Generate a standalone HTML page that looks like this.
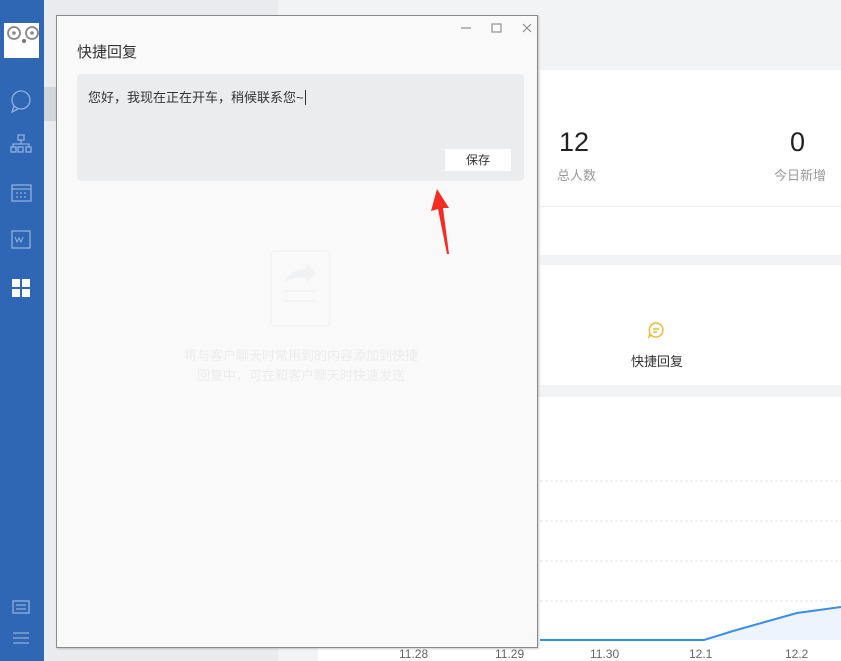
<!DOCTYPE html>
<html><head><meta charset="utf-8"><style>
*{margin:0;padding:0;box-sizing:border-box}
body{width:841px;height:661px;overflow:hidden;position:relative;background:#f2f3f5;font-family:"Liberation Sans","Noto Sans CJK SC",sans-serif}
.abs{position:absolute}
</style></head><body>
<div class="abs" style="left:0;top:0;width:44px;height:661px;background:#2f67b5"></div>
<div class="abs" style="left:4px;top:23px;width:35px;height:35px;background:#fff"></div>
<svg class="abs" style="left:4px;top:23px" width="35" height="22"><circle cx="10" cy="10" r="6" fill="none" stroke="#888" stroke-width="1.8"/><circle cx="10" cy="10" r="1.8" fill="#888"/><circle cx="28" cy="10" r="6" fill="none" stroke="#888" stroke-width="1.8"/><circle cx="28" cy="10" r="1.8" fill="#888"/><circle cx="20" cy="18" r="2" fill="#777"/></svg>
<svg class="abs" style="left:0;top:85px" width="44" height="320" fill="none" stroke="#8fb0de" stroke-width="1.3">
<circle cx="21" cy="15" r="9"/><path d="M14 21l-2 6 6-3" />
<rect x="18" y="50" width="6" height="5"/><rect x="11" y="62" width="5" height="5"/><rect x="18" y="62" width="5" height="5"/><rect x="26" y="62" width="5" height="5"/><path d="M21 55v4M13 62v-3h16v3"/>
<rect x="12" y="100" width="19" height="16"/><path d="M12 104h19"/><path d="M16 108h2M20 108h2M24 108h2M16 112h2M20 112h2M24 112h2"/>
<rect x="12" y="146" width="18" height="17"/><path d="M15 152l2 5 2-4 2 4 2-5" stroke-width="1"/>
</svg>
<div class="abs" style="left:12px;top:279px;width:8px;height:8px;background:#fff"></div><div class="abs" style="left:22px;top:279px;width:8px;height:8px;background:#fff"></div>
<div class="abs" style="left:12px;top:289px;width:8px;height:8px;background:#fff"></div><div class="abs" style="left:22px;top:289px;width:8px;height:8px;background:#fff"></div>
<svg class="abs" style="left:0;top:595px" width="44" height="60" fill="none" stroke="#8fb0de" stroke-width="1.3"><rect x="13" y="6" width="16" height="12"/><path d="M16 10h10M16 14h10"/><path d="M13 38h16M13 43h16M13 48h16"/></svg>
<div class="abs" style="left:44px;top:0;width:234px;height:661px;background:#e9ebee"></div>
<div class="abs" style="left:44px;top:87px;width:12px;height:34px;background:#d2d5d9"></div>
<div class="abs" style="left:540px;top:70px;width:301px;height:185px;background:#fff"></div>
<div class="abs" style="left:540px;top:206px;width:301px;height:1px;background:#eee"></div>
<div class="abs" style="left:540px;top:265px;width:301px;height:120px;background:#fff"></div>
<div class="abs" style="left:318px;top:397px;width:523px;height:264px;background:#fff"></div>
<div class="abs" style="left:559px;top:127px;font-size:27px;color:#222">12</div>
<div class="abs" style="left:557px;top:165px;font-size:13px;color:#999">总人数</div>
<div class="abs" style="left:790px;top:127px;font-size:27px;color:#222">0</div>
<div class="abs" style="left:774px;top:165px;font-size:13px;color:#999">今日新增</div>
<svg class="abs" style="left:647px;top:321px" width="18" height="18" fill="none" stroke="#f2b632" stroke-width="1.4"><path d="M9 2a7 7 0 1 1-5 12l-2 2 1-4A7 7 0 0 1 9 2z"/><path d="M6 8h6M6 11h4"/></svg>
<div class="abs" style="left:631px;top:351px;font-size:13px;color:#333">快捷回复</div>
<svg class="abs" style="left:540px;top:470px" width="301" height="191">
<g stroke="#e4e4e4" stroke-dasharray="3,2"><path d="M0 11h301M0 51h301M0 91h301M0 131h301"/></g>
<path d="M0 170h164l93-27 44-6V170z" fill="#eef4fd"/>
<path d="M0 170h164l29-9 64-18 44-6" fill="none" stroke="#3b8ee8" stroke-width="2"/>
</svg>
<div class="abs" style="left:399px;top:647px;font-size:12px;color:#666;width:442px">
<span class="abs" style="left:0">11.28</span><span class="abs" style="left:96px">11.29</span><span class="abs" style="left:191px">11.30</span><span class="abs" style="left:290px">12.1</span><span class="abs" style="left:386px">12.2</span></div>
<div class="abs" style="left:56px;top:15px;width:482px;height:633px;background:#f9f9f9;border:1px solid #8a8a8a;box-shadow:1px 1px 2px rgba(0,0,0,.2)"></div>
<svg class="abs" style="left:455px;top:20px" width="80" height="16" stroke="#888" fill="none" stroke-width="1.1"><path d="M6 8h10"/><rect x="37" y="4" width="9" height="8"/><path d="M68 4l8 8M76 4l-8 8"/></svg>
<div class="abs" style="left:77px;top:41px;font-size:15px;color:#333">快捷回复</div>
<div class="abs" style="left:77px;top:74px;width:447px;height:107px;background:#ebecee;border-radius:4px"></div>
<div class="abs" style="left:88px;top:87px;font-size:13px;color:#333">您好，我现在正在开车，稍候联系您~<span style="border-left:1px solid #333;margin-left:1px"></span></div>
<div class="abs" style="left:445px;top:149px;width:66px;height:22px;background:#fff;font-size:12px;color:#333;text-align:center;line-height:22px">保存</div>
<svg class="abs" style="left:270px;top:250px" width="62" height="78" fill="none" stroke="#f0f1f3" stroke-width="1.2"><rect x="1" y="1" width="59" height="75" rx="4"/><path d="M14 41h34M14 51h34"/><path d="M14 33c4-10 12-14 22-14v-6l10 10-10 10v-6c-10 0-16 2-22 6z" fill="#f1f2f4" stroke="none"/></svg>
<div class="abs" style="left:166px;top:346px;width:270px;font-size:13px;line-height:20px;color:#ececec;text-align:center;white-space:nowrap">将与客户聊天时常用到的内容添加到快捷<br>回复中，可在和客户聊天时快速发送</div>
<svg class="abs" style="left:425px;top:185px" width="35" height="75"><path d="M12 4l12 19-6 0 6 46-2 0-9-45-7 2z" fill="#f52c22"/></svg>
</body></html>
